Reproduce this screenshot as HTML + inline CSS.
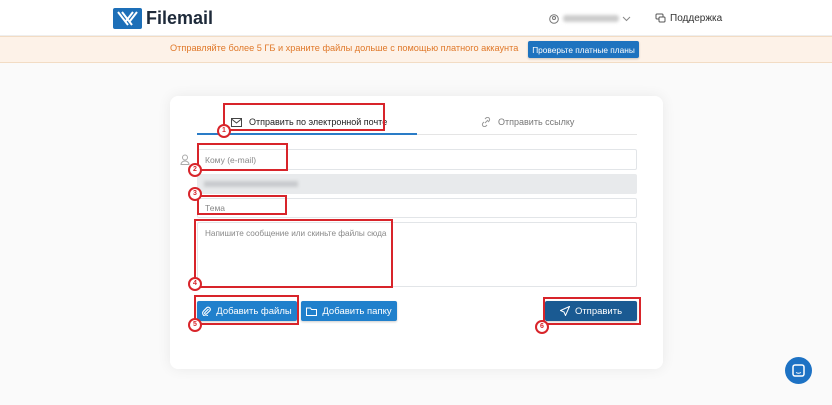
<!DOCTYPE html><html><head><meta charset="utf-8"><style>
*{margin:0;padding:0;box-sizing:border-box}
body{width:832px;height:405px;overflow:hidden;background:#fafafa;font-family:"Liberation Sans",sans-serif;position:relative;color:#333}
.a{position:absolute}
.hdr{left:0;top:0;width:832px;height:36px;background:#fff;border-bottom:1px solid #eee}
.ban{left:0;top:36px;width:832px;height:27px;background:#fdf2e8;border-top:1px solid #f2dcc4;border-bottom:1px solid #f2dcc4}
.card{left:170px;top:96px;width:493px;height:273px;background:#fff;border-radius:8px;box-shadow:0 0 14px rgba(0,0,0,.07)}
.inp{border:1px solid #e2e5e8;background:#fff;border-radius:2px;font-size:8.5px;color:#888;padding-left:7px}
.btn{background:#2080cc;color:#fff;font-size:9.5px;border-radius:2px;display:flex;align-items:center;justify-content:center;gap:5px;box-shadow:0 1px 2px rgba(0,0,0,.2)}
.r{border:2px solid #d8242a}
.c{width:14px;height:14px;border:2px solid #d8242a;border-radius:50%;background:#fff;font-size:7px;font-weight:bold;color:#d8242a;text-align:center;line-height:10px}
</style></head><body>
<div class="a hdr"></div>
<div class="a" style="left:113px;top:8px;width:29px;height:21px;background:#1d6fb8;border-radius:2px"><svg width="29" height="21"><path d="M5 4l10 13M9 4l10 13M24 4l-7 9M20 4l-7 9" stroke="#fff" stroke-width="2" fill="none"/></svg></div>
<div class="a" style="left:146px;top:8px;font-size:18px;font-weight:bold;color:#1e2a3a">Filemail</div>
<svg class="a" style="left:549px;top:14px" width="10" height="10"><circle cx="5" cy="5" r="4.3" fill="none" stroke="#777"/><circle cx="5" cy="4" r="1.5" fill="none" stroke="#777"/></svg>
<div class="a" style="left:563px;top:15px;width:56px;height:7px;background:#ccc;border-radius:3px;filter:blur(1.5px)"></div>
<svg class="a" style="left:622px;top:16px" width="9" height="6"><path d="M1 1l3.5 3.5L8 1" stroke="#888" fill="none"/></svg>
<svg class="a" style="left:655px;top:13px" width="11" height="11"><rect x="1" y="1" width="7" height="5" rx="1" fill="none" stroke="#555"/><rect x="4" y="4" width="6" height="5" rx="1" fill="#fff" stroke="#555"/></svg>
<div class="a" style="left:670px;top:13px;font-size:10px;color:#333">Поддержка</div>
<div class="a ban"></div>
<div class="a" style="left:170px;top:43px;font-size:9.2px;color:#e0792a;white-space:nowrap">Отправляйте более 5 ГБ и храните файлы дольше с помощью платного аккаунта</div>
<div class="a btn" style="left:528px;top:41px;width:111px;height:17px;font-size:8.3px;background:#1e73bf">Проверьте платные планы</div>
<div class="a card"></div>
<svg class="a" style="left:231px;top:118px" width="11" height="9"><rect x="0.5" y="0.5" width="10" height="8" fill="none" stroke="#444"/><path d="M.5 1l5 4 5-4" stroke="#444" fill="none"/></svg>
<div class="a" style="left:249px;top:117px;font-size:9px;color:#222;white-space:nowrap">Отправить по электронной почте</div>
<svg class="a" style="left:481px;top:117px" width="10" height="10"><path d="M4 6l3-3M3 5l-1 1a2 2 0 003 3l1-1M7 5l1-1a2 2 0 00-3-3L4 2" stroke="#999" fill="none"/></svg>
<div class="a" style="left:498px;top:117px;font-size:9px;color:#777">Отправить ссылку</div>
<div class="a" style="left:197px;top:133px;width:220px;height:2px;background:#2a7cc7"></div>
<div class="a" style="left:417px;top:134px;width:220px;height:1px;background:#e5e5e5"></div>
<svg class="a" style="left:180px;top:154px" width="10" height="11"><circle cx="5" cy="3.5" r="2.5" fill="none" stroke="#aaa"/><path d="M1 10.5a4 3.5 0 018 0z" fill="none" stroke="#aaa"/></svg>
<div class="a inp" style="left:197px;top:149px;width:440px;height:21px;line-height:20px">Кому (e-mail)</div>
<div class="a" style="left:197px;top:174px;width:440px;height:20px;background:#e8eaec;border-radius:2px"></div>
<div class="a" style="left:204px;top:181px;width:94px;height:6px;background:#c8cacd;filter:blur(1.5px)"></div>
<div class="a inp" style="left:197px;top:198px;width:440px;height:20px;line-height:19px">Тема</div>
<div class="a inp" style="left:197px;top:222px;width:440px;height:65px;padding-top:6px;font-size:8.2px">Напишите сообщение или скиньте файлы сюда</div>
<div class="a btn" style="left:197px;top:301px;width:100px;height:20px"><svg width="9" height="10"><path d="M6.5 3L3 6.5a1 1 0 001.5 1.5L8 4.5a2.2 2.2 0 00-3-3L1.5 5a3 3 0 004.3 4.2" stroke="#fff" fill="none" stroke-width="1.1"/></svg>Добавить файлы</div>
<div class="a btn" style="left:301px;top:301px;width:96px;height:20px"><svg width="11" height="9"><path d="M.5 1h4l1 1.5h5v6h-10z" fill="none" stroke="#fff"/></svg>Добавить папку</div>
<div class="a btn" style="left:545px;top:301px;width:92px;height:20px;background:#1a5a92"><svg width="10" height="10"><path d="M9.5.5L.5 4.5l3.5 1.5L5.5 9.5z" fill="none" stroke="#fff"/></svg>Отправить</div>
<div class="a r" style="left:223px;top:103px;width:162px;height:28px"></div>
<div class="a r" style="left:197px;top:143px;width:91px;height:28px"></div>
<div class="a r" style="left:197px;top:195px;width:90px;height:20px"></div>
<div class="a r" style="left:194px;top:219px;width:199px;height:69px"></div>
<div class="a r" style="left:194px;top:295px;width:105px;height:30px"></div>
<div class="a r" style="left:543px;top:297px;width:98px;height:28px"></div>
<div class="a c" style="left:217px;top:124px">1</div>
<div class="a c" style="left:188px;top:163px">2</div>
<div class="a c" style="left:188px;top:187px">3</div>
<div class="a c" style="left:188px;top:277px">4</div>
<div class="a c" style="left:188px;top:318px">5</div>
<div class="a c" style="left:535px;top:320px">6</div>
<div class="a" style="left:785px;top:357px;width:27px;height:27px;border-radius:50%;background:#1d72c4"><svg class="a" style="left:7px;top:7px" width="13" height="13"><rect x="1" y="1" width="11" height="11" rx="2" fill="none" stroke="#fff" stroke-width="1.5"/><path d="M4 8.5q2.5 1.5 5 0" stroke="#fff" fill="none"/></svg></div>
</body></html>
